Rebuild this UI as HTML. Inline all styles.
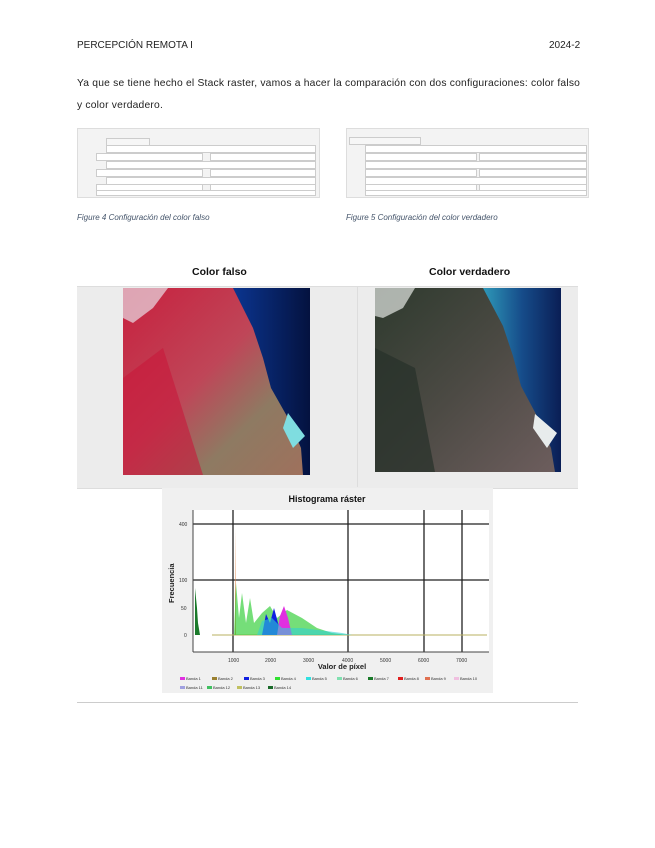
<!DOCTYPE html>
<html><head><meta charset="utf-8"><style>
body{margin:0;background:#fff;width:655px;height:848px;position:relative;font-family:"Liberation Sans",sans-serif;color:#222;overflow:hidden}
.a{position:absolute}
.t{font-size:10px}
.cap{font-size:8px;font-style:italic;color:#44546a}
.ttl{font-size:10.5px;font-weight:bold;color:#111}
.cfg{background:#f3f3f3;border:1px solid #ddd}
.row{position:absolute;height:6px;background:#fff;border:1px solid #ccc}
</style></head><body>
<div class="a t" style="left:77px;top:40px">PERCEPCIÓN REMOTA I</div>
<div class="a t" style="left:549px;top:40px">2024-2</div>
<div class="a" style="left:77px;top:78px;font-size:10.3px;letter-spacing:0.2px;white-space:nowrap"> Ya que se tiene hecho el Stack raster, vamos a hacer la comparación con dos configuraciones: color falso</div>
<div class="a" style="left:77px;top:100px;font-size:10.3px;letter-spacing:0.2px">y color verdadero.</div>

<div class="a cfg" style="left:77px;top:128px;width:241px;height:68px">
<div class="row" style="left:28px;top:9px;width:42px;background:#f6f6f6"></div>
<div class="row" style="left:28px;top:16px;width:208px"></div>
<div class="row" style="left:18px;top:24px;width:105px"></div><div class="row" style="left:132px;top:24px;width:104px"></div>
<div class="row" style="left:28px;top:32px;width:208px"></div>
<div class="row" style="left:18px;top:40px;width:105px"></div><div class="row" style="left:132px;top:40px;width:104px"></div>
<div class="row" style="left:28px;top:48px;width:208px"></div>
<div class="row" style="left:18px;top:55px;width:105px"></div><div class="row" style="left:132px;top:55px;width:104px"></div>
<div class="row" style="left:18px;top:61px;width:218px;height:4px"></div>
</div>
<div class="a cfg" style="left:346px;top:128px;width:241px;height:68px">
<div class="row" style="left:2px;top:8px;width:70px;background:#f6f6f6"></div>
<div class="row" style="left:18px;top:16px;width:220px"></div>
<div class="row" style="left:18px;top:24px;width:110px"></div><div class="row" style="left:132px;top:24px;width:106px"></div>
<div class="row" style="left:18px;top:32px;width:220px"></div>
<div class="row" style="left:18px;top:40px;width:110px"></div><div class="row" style="left:132px;top:40px;width:106px"></div>
<div class="row" style="left:18px;top:48px;width:220px"></div>
<div class="row" style="left:18px;top:55px;width:110px"></div><div class="row" style="left:132px;top:55px;width:106px"></div>
<div class="row" style="left:18px;top:61px;width:220px;height:4px"></div>
</div>
<div class="a cap" style="left:77px;top:213px">Figure 4 Configuración del color falso</div>
<div class="a cap" style="left:346px;top:213px">Figure 5 Configuración del color verdadero</div>

<div class="a ttl" style="left:192px;top:266px">Color falso</div>
<div class="a ttl" style="left:429px;top:266px">Color verdadero</div>

<div class="a" style="left:77px;top:286px;width:501px;height:201px;background:#ececec;border-top:1px solid #ddd;border-bottom:1px solid #ddd"></div>
<div class="a" style="left:357px;top:286px;width:1px;height:201px;background:#ddd"></div>

<svg class="a" style="left:123px;top:288px" width="187" height="187" viewBox="0 0 187 187">
<defs><linearGradient id="g1" x1="0" y1="0" x2="1" y2="1"><stop offset="0" stop-color="#c8203e"/><stop offset=".45" stop-color="#bf4658"/><stop offset=".7" stop-color="#8e7a62"/><stop offset="1" stop-color="#a0705c"/></linearGradient>
<linearGradient id="s1" x1="0" y1="0" x2="1" y2="0"><stop offset="0" stop-color="#0b3590"/><stop offset="1" stop-color="#04123f"/></linearGradient></defs>
<rect width="187" height="187" fill="url(#g1)"/>
<path d="M0 90 L40 60 L80 187 L0 187Z" fill="#c8183a" opacity=".6"/>
<path d="M110 0 L187 0 L187 187 L180 187 L178 160 L165 130 L148 100 L140 70 L130 40Z" fill="url(#s1)"/>
<path d="M0 0 L45 0 L30 20 L10 35 L0 30Z" fill="#e8dde6" opacity=".7"/>
<path d="M165 125 L182 148 L170 160 L160 140Z" fill="#7fdde0"/>
</svg>
<svg class="a" style="left:375px;top:288px" width="186" height="184" viewBox="0 0 186 184">
<defs><linearGradient id="g2" x1="0" y1="0" x2="1" y2="1"><stop offset="0" stop-color="#2e3a2e"/><stop offset=".5" stop-color="#4c4a44"/><stop offset="1" stop-color="#6e5e5e"/></linearGradient>
<linearGradient id="s2" x1="0" y1="0" x2="1" y2="0"><stop offset="0" stop-color="#2e98b8"/><stop offset=".5" stop-color="#164c8a"/><stop offset="1" stop-color="#0a1e55"/></linearGradient></defs>
<rect width="186" height="184" fill="url(#g2)"/>
<path d="M0 60 L40 80 L60 184 L0 184Z" fill="#26302a" opacity=".7"/>
<path d="M108 0 L186 0 L186 184 L180 184 L176 160 L162 128 L146 98 L138 68 L128 38Z" fill="url(#s2)"/>
<path d="M0 0 L40 0 L28 20 L8 30 L0 28Z" fill="#d8dcd8" opacity=".75"/>
<path d="M160 126 L182 145 L172 160 L158 140Z" fill="#e8ecec"/>
</svg>

<svg class="a" style="left:162px;top:488px" width="331" height="205" viewBox="0 0 331 205">
<rect width="331" height="205" fill="#f0f0f0"/>
<rect x="31" y="22" width="296" height="142" fill="#fff"/>
<text x="165" y="14" font-family="Liberation Sans" font-size="9" font-weight="bold" text-anchor="middle" fill="#111">Histograma ráster</text>
<g stroke="#222" stroke-width="1.3">
<line x1="31" y1="36" x2="327" y2="36"/><line x1="31" y1="92" x2="327" y2="92"/>
<line x1="71" y1="22" x2="71" y2="164"/><line x1="186" y1="22" x2="186" y2="164"/><line x1="262" y1="22" x2="262" y2="164"/><line x1="300" y1="22" x2="300" y2="164"/>
</g>
<line x1="31" y1="22" x2="31" y2="164" stroke="#444"/><line x1="31" y1="164" x2="327" y2="164" stroke="#444"/>
<line x1="50" y1="147" x2="325" y2="147" stroke="#b8b060"/>
<path d="M33 147 L33 100 L34 110 L35 120 L36 135 L38 147Z" fill="#1a7a2a"/>
<path d="M73 147 L73 40 L74 147Z" fill="#e08040"/>
<path d="M72 147 L74 95 L77 130 L80 105 L84 135 L88 110 L92 135 L100 125 L108 118 L115 130 L125 122 L140 130 L155 140 L170 145 L185 147Z" fill="#3ad040" opacity=".7"/>
<path d="M100 147 L104 126 L108 135 L112 120 L116 135 L120 147Z" fill="#1020e0"/>
<path d="M115 147 L118 128 L122 118 L126 130 L130 147Z" fill="#e030e0"/>
<path d="M95 147 L100 133 L110 130 L120 140 L140 140 L180 145 L190 147Z" fill="#30d0d0" opacity=".6"/>
<g font-family="Liberation Sans" font-size="5" fill="#333">
<text x="17" y="38">400</text><text x="17" y="94">100</text><text x="19" y="122">50</text><text x="22" y="149">0</text>
<text x="66" y="174">1000</text><text x="103" y="174">2000</text><text x="141" y="174">3000</text><text x="180" y="174">4000</text><text x="218" y="174">5000</text><text x="256" y="174">6000</text><text x="294" y="174">7000</text>
</g>
<text x="180" y="181" font-family="Liberation Sans" font-size="7.5" font-weight="bold" text-anchor="middle" fill="#222">Valor de píxel</text>
<text transform="translate(12,115) rotate(-90)" font-family="Liberation Sans" font-size="7.5" font-weight="bold" fill="#222">Frecuencia</text>
<g font-family="Liberation Sans" font-size="4" fill="#333">
<rect x="18" y="189" width="5" height="3" fill="#e030e0"/><text x="24" y="192">Banda 1</text>
<rect x="50" y="189" width="5" height="3" fill="#9a8030"/><text x="56" y="192">Banda 2</text>
<rect x="82" y="189" width="5" height="3" fill="#1020e0"/><text x="88" y="192">Banda 3</text>
<rect x="113" y="189" width="5" height="3" fill="#30e030"/><text x="119" y="192">Banda 4</text>
<rect x="144" y="189" width="5" height="3" fill="#30e0e0"/><text x="150" y="192">Banda 5</text>
<rect x="175" y="189" width="5" height="3" fill="#80e0b0"/><text x="181" y="192">Banda 6</text>
<rect x="206" y="189" width="5" height="3" fill="#1a7a2a"/><text x="212" y="192">Banda 7</text>
<rect x="236" y="189" width="5" height="3" fill="#e02020"/><text x="242" y="192">Banda 8</text>
<rect x="263" y="189" width="5" height="3" fill="#e07050"/><text x="269" y="192">Banda 9</text>
<rect x="292" y="189" width="5" height="3" fill="#f0c0e0"/><text x="298" y="192">Banda 10</text>
<rect x="18" y="198" width="5" height="3" fill="#a0a0e0"/><text x="24" y="201">Banda 11</text>
<rect x="45" y="198" width="5" height="3" fill="#40c060"/><text x="51" y="201">Banda 12</text>
<rect x="75" y="198" width="5" height="3" fill="#c0c060"/><text x="81" y="201">Banda 13</text>
<rect x="106" y="198" width="5" height="3" fill="#1a6a2a"/><text x="112" y="201">Banda 14</text>
</g>
</svg>
<div class="a" style="left:77px;top:702px;width:501px;height:1px;background:#ccc"></div>
</body></html>
